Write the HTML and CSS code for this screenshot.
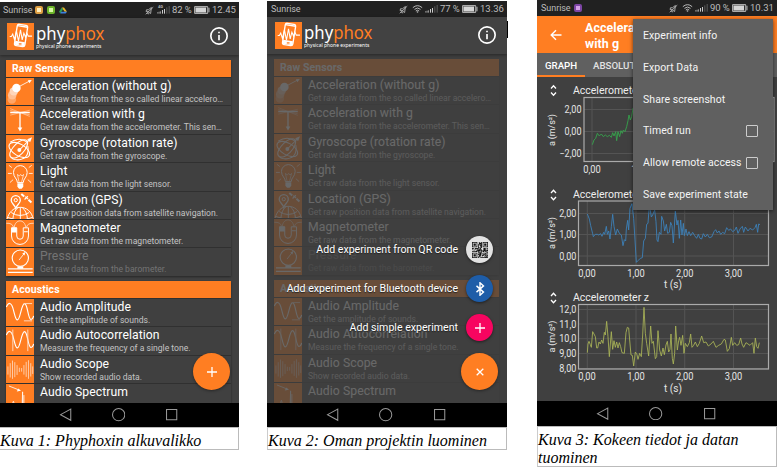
FILE: index.html
```html
<!DOCTYPE html>
<html lang="fi">
<head>
<meta charset="utf-8">
<title>Phyphox</title>
<link rel="stylesheet" href="styles.css">
</head>
<body>
<svg class="defs" width="0" height="0">
  <symbol id="logo" viewBox="0 0 80 80">
    <rect width="80" height="80" fill="#ff7e22"/>
    <g transform="rotate(9 42 38)" fill="none" stroke="#fff" stroke-width="4">
      <rect x="26" y="5" width="31" height="64" rx="6"/>
      <path d="M27 61H56" stroke-width="12"/>
      <path d="M26 10H57" stroke-width="4"/>
    </g>
    <path d="M8 40h5l4-7 5 16 6-26 6 31 6-34 5 30 5-20 5 12 4-12 4 9h11" fill="none" stroke="#fff" stroke-width="3.2"/>
    <path d="M35 62h8" stroke="#ff7e22" stroke-width="4"/>
  </symbol>
  <symbol id="accel" viewBox="0 0 84 84">
    <circle cx="17" cy="66" r="13" fill="#ffa566"/><circle cx="18" cy="53" r="13" fill="#ffbf94"/><circle cx="23" cy="41" r="13" fill="#ffd6ba"/><circle cx="31" cy="31" r="13" fill="#fff"/>
    <path d="M32 30L72 9" stroke="#fff" stroke-width="2.5"/><path d="M78 6l-12 1 5 9z" fill="#fff"/>
  </symbol>
  <symbol id="gravity" viewBox="0 0 84 84">
    <g stroke="#fff" fill="none"><path d="M12 20H72" stroke-width="5"/><path d="M12 8L72 32M12 14L72 27M12 28L72 13" stroke-width="1.6" opacity=".8"/><path d="M42 20V68" stroke-width="4"/></g>
    <path d="M35 66h14l-7 12z" fill="#fff"/>
  </symbol>
  <symbol id="gyro" viewBox="0 0 84 84">
    <g stroke="#fff" fill="none" stroke-width="3.2"><ellipse cx="40" cy="46" rx="35" ry="18" transform="rotate(30 40 46)"/><path d="M12 66C2 48 48 2 64 18C74 36 30 86 12 66z"/><path d="M12 22Q40 4 64 22M66 34Q72 70 40 76Q20 78 12 66"/><path d="M40 46L70 16"/></g>
    <circle cx="40" cy="46" r="6" fill="#fff"/><path d="M79 7l-15 6 9 9z" fill="#fff"/>
  </symbol>
  <symbol id="light" viewBox="0 0 84 84">
    <g stroke="#fff" fill="none" stroke-width="3"><path d="M34 60C34 48 22 44 22 29a21 21 0 0 1 42 0C64 44 52 48 52 60z"/><path d="M39 58L34 35l6 5 4-5 4 5 5-5-6 23" stroke-width="2"/><path d="M8 7l9 7M5 32h12M11 60l10-9M78 7l-9 7M81 32H69M76 60l-10-9" stroke-width="2.5"/></g>
    <path d="M34 62h18v11l-5 6h-8l-5-6z" fill="#fff"/>
  </symbol>
  <symbol id="gps" viewBox="0 0 84 84">
    <g stroke="#fff" fill="none" stroke-width="3"><path d="M2 84C8 60 24 47 43 47s35 13 40 37M15 63q27 18 55 0M20 84q2-26 17-37M65 84q-2-26-17-37M43 47v37M4 78q38 15 76 0"/><path d="M29 50C25 38 15 35 15 25a14 14 0 0 1 28 0c0 10-10 13-14 25z" fill="#ff7e22" stroke-width="4"/><circle cx="29" cy="25" r="5"/><path d="M46 6l9 8M68 24l9 8" stroke-width="6"/><path d="M58 14l9 8M56 23l10-10" stroke-width="3.5"/></g>
  </symbol>
  <symbol id="magnet" viewBox="0 0 84 84">
    <g stroke="#fff" fill="none" stroke-width="3"><path d="M16 24v25a26 26 0 0 0 52 0V24H52v25a10 10 0 0 1-20 0V24z"/><path d="M54 36h12" /><path d="M24 23C28-4 56-4 60 23M0 10Q19 9 22 22M84 10Q65 9 62 22" stroke-width="2"/></g>
    <path d="M16 23h16v15H16z" fill="#fff"/>
  </symbol>
  <symbol id="pressure" viewBox="0 0 84 84">
    <g stroke="#fff" fill="none" stroke-width="3.5"><circle cx="43" cy="31" r="25"/><path d="M5 64h76M5 75h76" stroke-width="4"/><path d="M39 37L54 18" stroke-width="2.5"/></g><path d="M34 56h18v8H34zM58 12l-9 5 7 6z" fill="#fff"/>
  </symbol>
  <symbol id="amplitude" viewBox="0 0 84 84">
    <path d="M0 25C7 8 15 11 20 27C28 55 28 64 34 64C43 64 46 14 56 14C66 14 66 63 76 63Q81 63 84 52" fill="none" stroke="#fff" stroke-width="3.5"/><path d="M54 14h25M54 67h25" stroke="#ffd8bd" stroke-width="3"/>
  </symbol>
  <symbol id="autocorr" viewBox="0 0 84 84">
    <path d="M0 25C7 8 15 11 20 27C28 55 28 64 34 64C43 64 46 14 56 14C66 14 66 63 76 63Q81 63 84 52" fill="none" stroke="#fff" stroke-width="3.5"/><path d="M20 8V74M66 8V74" stroke="#ffd8bd" stroke-width="3"/>
  </symbol>
  <symbol id="scope" viewBox="0 0 84 84">
    <path d="M5 32V57M12 22V66M19 14V70M26 19V65M33 28V58M40 36V49M47 37V48M54 28V57M61 18V64M68 13V70M75 22V63M81 32V55" stroke="#ffd8bd" stroke-width="2.6"/>
  </symbol>
  <symbol id="spectrum" viewBox="0 0 84 84">
    <path d="M8 6L38 18" stroke="#fff" stroke-width="2.5"/><path d="M45 21l-13 2 5-9z" fill="#fff"/><path d="M18 84Q19 52 22 53Q24 54 25 84M48 84L50 24L51 84M54 84V34" stroke="#fff" fill="none" stroke-width="2.4"/>
  </symbol>
  <symbol id="mute" viewBox="0 0 24 24">
    <path d="M4 10h5l8-6-2 16-7-5H3zM2 22L22 3M6 20l5 1" fill="none" stroke="#bbb" stroke-width="2.3"/>
  </symbol>
  <symbol id="wifi" viewBox="0 0 32 24">
    <path d="M2 8Q16-4 30 8M7 13Q16 5 25 13M11 18Q16 13 21 18" fill="none" stroke="#bbb" stroke-width="3"/><circle cx="16" cy="21" r="2.5" fill="#bbb"/>
  </symbol>
  <symbol id="signal" viewBox="0 0 38 24">
    <path d="M2 18v5M6 17v6M10 16v7" stroke="#ccc" stroke-width="2"/><path d="M16 12v11M22 9v14" stroke="#ccc" stroke-width="3"/><path d="M29 4v19M36 0v23" stroke="#666" stroke-width="2.5"/>
  </symbol>
  <symbol id="battery" viewBox="0 0 45 22">
    <rect x="1.5" y="1.5" width="37" height="19" rx="2" fill="none" stroke="#aaa" stroke-width="3"/><path d="M4 4h30v14H4z" fill="#d5d5d5"/><path d="M42 5v12" stroke="#bbb" stroke-width="3"/>
  </symbol>
  <symbol id="info" viewBox="0 0 54 54">
    <circle cx="27" cy="27" r="24.5" fill="none" stroke="#fff" stroke-width="5"/><path d="M27 24v16M27 14v5" stroke="#fff" stroke-width="5"/>
  </symbol>
</svg>

<main class="sheet">
  <figure class="shot first">
    <div class="phone">
      <div class="status"><span class="carrier">Sunrise</span><i class="note amber"></i><i class="note green"></i><svg class="drive" viewBox="0 0 24 20"><path d="M8 1h7l9 13h-7z" fill="#e8b72b"/><path d="M8 1l4 6-8 12-4-5z" fill="#2c9b5b"/><path d="M7 14h17l-4 5H4z" fill="#3c7fe0"/></svg>
        <span class="grow"></span><svg class="mute"><use href="#mute"/></svg><span class="lte">4G</span><svg class="signal"><use href="#signal"/></svg><span class="pct">82 %</span><svg class="battery"><use href="#battery"/></svg><span class="clock">12.45</span></div>
      <header class="appbar"><svg class="logo"><use href="#logo"/></svg><div class="brand"><b>phy<em>phox</em></b><small>physical phone experiments</small></div><svg class="info"><use href="#info"/></svg></header>
      <div class="content" data-list></div>
      <nav class="navbar"></nav>
      <div class="fab"><svg viewBox="0 0 12 12"><path d="M6 1v10M1 6h10"/></svg></div>
    </div>
    <figcaption><span class="c1">Kuva 1: Phyphoxin alkuvalikko</span></figcaption>
  </figure>

  <figure class="shot second">
    <div class="phone">
      <div class="status"><span class="carrier">Sunrise</span><span class="grow"></span><svg class="mute"><use href="#mute"/></svg><svg class="wifi"><use href="#wifi"/></svg><svg class="signal"><use href="#signal"/></svg><span class="pct">77 %</span><svg class="battery"><use href="#battery"/></svg><span class="clock">13.36</span></div>
      <header class="appbar"><svg class="logo"><use href="#logo"/></svg><div class="brand"><b>phy<em>phox</em></b><small>physical phone experiments</small></div><svg class="info"><use href="#info"/></svg></header>
      <div class="content dim" data-list></div>
      <nav class="navbar"></nav>
      <div class="actions">
        <div class="action"><span class="a1">Add experiment from QR code</span><i class="mini white"><svg id="qr" viewBox="0 0 21 21"></svg></i></div>
        <div class="action"><span class="a2">Add experiment for Bluetooth device</span><i class="mini blue"><svg class="bt" viewBox="0 0 24 36"><path d="M3 10L21 26 12 34V2L21 10 3 26" fill="none" stroke="#fff" stroke-width="3.6"/></svg></i></div>
        <div class="action"><span class="a3">Add simple experiment</span><i class="mini pink"><svg class="plus" viewBox="0 0 12 12"><path d="M6 1v10M1 6h10"/></svg></i></div>
      </div>
      <div class="fab"><svg viewBox="0 0 12 12"><path d="M2.7 2.7l6.6 6.6M9.3 2.7L2.7 9.3"/></svg></div>
    </div>
    <i class="caret"></i>
    <figcaption><span class="c2">Kuva 2: Oman projektin luominen</span></figcaption>
  </figure>

  <figure class="shot third">
    <div class="phone">
      <div class="status"><span class="carrier">Sunrise</span><i class="note violet"></i><span class="grow"></span><svg class="mute"><use href="#mute"/></svg><svg class="wifi"><use href="#wifi"/></svg><svg class="signal"><use href="#signal"/></svg><span class="pct">90 %</span><svg class="battery"><use href="#battery"/></svg><span class="clock">10.31</span></div>
      <header class="expbar"><svg class="back" viewBox="0 0 12 12"><path d="M11.5 6H1.5M6 1.2L1.2 6 6 10.8"/></svg><h1>Accelera<br>with g</h1></header>
      <div class="tabs"><span class="tab on">GRAPH</span><span class="tab">ABSOLUTE</span></div>
      <div class="graphs"><svg id="charts" width="240" height="324" viewBox="537 77 240 324"></svg></div>
      <nav class="navbar"></nav>
      <div class="menu">
        <div><span>Experiment info</span></div><div><span>Export Data</span></div><div><span>Share screenshot</span></div>
        <div><span>Timed run</span><i></i></div><div><span>Allow remote access</span><i></i></div><div><span>Save experiment state</span></div>
      </div>
    </div>
    <figcaption><span class="c3">Kuva 3: Kokeen tiedot ja datan<br>tuominen</span></figcaption>
  </figure>
</main>
<script src="script.js"></script>
</body>
</html>
```
FILE: styles.css
```css
* { box-sizing: border-box; }
body { margin: 0; width: 779px; height: 470px; overflow: hidden; background: #fff; font-family: Roboto, sans-serif; color: #fff; }
.defs { position: absolute; }
.sheet { display: flex; align-items: flex-start; }
.shot { margin: 0; width: 240px; position: relative; }
.first { width: 239px; padding-top: 2px; margin-right: 28px; }
.second { padding-top: 1px; margin-right: 30px; }
.phone { position: relative; background: #404040; display: flex; flex-direction: column; overflow: hidden; }
.first .phone { height: 425px; }
.second .phone { height: 426px; }
.third .phone { height: 426px; }

.status { height: 16px; flex: none; background: #212121; color: #bcbcbc; font-size: 9px; line-height: 16px; display: flex; align-items: center; padding: 0 5px 0 4px; white-space: nowrap; }
.first .status { padding-left: 3px; }
.carrier { width: 29px; letter-spacing: -.05px; }
.grow { flex: 1; }
.note { width: 8px; height: 8px; border-radius: 2px; margin-left: 4px; border: 2px solid; }
.first .carrier { margin-right: -1px; }
.amber { background: #fff0c0; border-color: #dfa044; }
.green { background: #d9f7a8; border-color: #6eb52b; }
.violet { background: #d4a0e8; border-color: #7d45a5; }
.drive { width: 8px; height: 7px; margin-left: 4px; }
.mute { width: 9px; height: 9px; margin-right: 4px; }
.wifi { width: 11px; height: 8px; margin-right: 2px; }
.signal { width: 13px; height: 8px; margin-right: 2px; }
.lte { font-size: 4px; width: 5px; line-height: 5px; align-self: flex-start; margin: 2px -6px 0 0; font-weight: 700; }
.pct { font-size: 9.5px; width: 19px; letter-spacing: -.1px; }
.battery { width: 16px; height: 8px; margin: 0 2px 0 3px; }
.clock { font-size: 9.5px; width: 22px; text-align: right; }

.appbar { height: 37px; flex: none; background: #424242; display: flex; padding: 5px 11px 0 7px; box-shadow: 0 1px 3px rgba(0,0,0,.4); z-index: 1; }
.second .appbar { padding: 5px 11px 0 8px; }
.logo { width: 27px; height: 27px; margin-right: 2px; }
.brand { flex: 1; display: flex; flex-direction: column; font-family: "Noto Sans", sans-serif; transform: scaleX(.9); transform-origin: left; }
.brand b { font-weight: 400; font-size: 18.6px; line-height: 20px; height: 20px; letter-spacing: 0; }
.brand em { font-style: normal; color: #ff7e22; }
.brand small { font-size: 5.5px; line-height: 7px; white-space: nowrap; }
.info { width: 18px; height: 18px; margin-top: 4px; }

.content { flex: 1; min-height: 0; overflow: hidden; padding: 5px 8px 0 6px; position: relative; }
.second .content { padding-left: 7px; }
.dim::after { content: ""; position: absolute; inset: 0; background: rgba(64,64,64,.79); }
.card { margin-bottom: 5px; box-shadow: 0 1px 2px rgba(0,0,0,.4); }
.card h2 { margin: 0; height: 17px; background: #ff7e22; font-size: 10.5px; line-height: 18px; font-weight: 700; padding-left: 6px; letter-spacing: .08px; }
.row { height: 28.4px; border-top: 1px solid #303030; display: flex; }
.row svg { width: 28px; height: 27.4px; background: #ff7e22; flex: none; margin-right: 6px; }
.row div { min-width: 0; flex: 1; white-space: nowrap; }
.row b { display: block; font-weight: 400; font-size: 12.2px; line-height: 15px; height: 16px; padding-top: 1px; letter-spacing: .08px; }
.row small { display: block; font-size: 8.6px; line-height: 11px; color: #c4c4c4; }
.off b, .off small { color: #747474; }

.navbar { height: 24px; flex: none; background: #000; display: flex; align-items: center; justify-content: center; gap: 40px; padding-right: 2px; }
.third .navbar { height: 25px; }
.navbar svg { width: 13.3px; height: 13.3px; fill: none; stroke: #999; stroke-width: 1; }

.fab { position: absolute; left: 193px; top: 351px; width: 37px; height: 37px; border-radius: 50%; background: #ff7e22; display: flex; align-items: center; justify-content: center; box-shadow: 0 1px 3px rgba(0,0,0,.4); }
.second .fab { left: 194px; top: 352px; }
.fab svg, .plus { width: 12px; height: 12px; stroke: #fff; fill: none; stroke-width: 1.3; }
.actions { position: absolute; right: 14px; top: 235px; display: flex; flex-direction: column; gap: 12px; align-items: flex-end; }
.action { display: flex; align-items: center; height: 27px; gap: 8px; font-size: 10.6px; white-space: nowrap; text-shadow: 0 1px 1px #222; }
.action span { margin-top: -1px; }
.mini { width: 27px; height: 27px; border-radius: 50%; display: flex; align-items: center; justify-content: center; box-shadow: 0 1px 3px rgba(0,0,0,.5); }
.white { background: #e2e2e2; }
.blue { background: #1e5da8; }
.pink { background: #f70560; }
#qr { width: 16px; height: 16px; }
.bt { width: 10px; height: 14px; }
.caret { position: absolute; left: 239px; top: 21px; width: 2px; height: 17px; background: #000; }

.expbar { height: 37px; flex: none; background: #ff7e22; display: flex; }
.back { width: 12px; height: 12px; margin: 13px 23px 0 13px; fill: none; stroke: #fff; stroke-width: 1.4; }
.expbar h1 { margin: 4px 0 0; font-size: 12.4px; line-height: 15.6px; font-weight: 700; letter-spacing: .1px; }
.tabs { height: 24px; flex: none; background: #606060; display: flex; font-size: 9.7px; font-weight: 500; line-height: 25px; }
.tab { padding: 0 8px; height: 24px; color: #e2e2e2; }
.tab.on { color: #fff; border-bottom: 2px solid #ff7e22; width: 48px; }
.graphs { flex: 1; min-height: 0; }
.graphs svg { display: block; }
.graphs text { font-size: 10px; fill: #e4e4e4; }
.graphs .title { font-size: 10.5px; fill: #eee; }
.menu { position: absolute; left: 96px; top: 19px; width: 140px; height: 191px; padding-top: .6px; background: #606060; box-shadow: 0 1px 4px rgba(0,0,0,.6); font-size: 10.5px; letter-spacing: .06px; color: #f4f4f4; }
.menu div { height: 31.8px; display: flex; align-items: center; justify-content: space-between; padding: 0 15px 0 10px; white-space: nowrap; }
.menu i { width: 12px; height: 12px; border: 1.5px solid #ccc; border-radius: 1px; }

figcaption { height: 23px; border: 1px solid #bbb; border-left-color: #ccc; color: #000; font: italic 16px/18px "Liberation Serif", serif; white-space: nowrap; padding-top: 4px; }
.first figcaption { border-left: 0; }
.third figcaption { height: 41px; padding-top: 4px; }
```
FILE: script.js
```js
const groups = [
  ["Raw Sensors", [
    ["accel", "Acceleration (without g)", "Get raw data from the so called linear accelero…"],
    ["gravity", "Acceleration with g", "Get raw data from the accelerometer. This sen…"],
    ["gyro", "Gyroscope (rotation rate)", "Get raw data from the gyroscope."],
    ["light", "Light", "Get raw data from the light sensor."],
    ["gps", "Location (GPS)", "Get raw position data from satellite navigation."],
    ["magnet", "Magnetometer", "Get raw data from the magnetometer."],
    ["pressure", "Pressure", "Get raw data from the barometer."]]],
  ["Acoustics", [
    ["amplitude", "Audio Amplitude", "Get the amplitude of sounds."],
    ["autocorr", "Audio Autocorrelation", "Measure the frequency of a single tone."],
    ["scope", "Audio Scope", "Show recorded audio data."],
    ["spectrum", "Audio Spectrum", ""]]]
];
const listHtml = groups.map(([title, rows]) => `<section class="card"><h2>${title}</h2>` +
  rows.map(([icon, name, text]) => `<div class="row${icon === "pressure" ? " off" : ""}"><svg><use href="#${icon}"/></svg><div><b>${name}</b><small>${text}</small></div></div>`).join("") +
  "</section>").join("");
document.querySelectorAll("[data-list]").forEach(el => { el.innerHTML = listHtml; });

document.querySelectorAll(".navbar").forEach(el => {
  el.innerHTML = '<svg viewBox="0 0 13 13"><path d="M11.5 1v11L1.5 6.5z"/></svg><svg viewBox="0 0 13 13"><circle cx="6.5" cy="6.5" r="6"/></svg><svg viewBox="0 0 13 13"><path d="M1.5 1.5h10v10h-10z"/></svg>';
});

// QR glyph: three finder marks around a scattered module pattern
let qr = "";
let seed = 7;
for (let y = 0; y < 21; y++) for (let x = 0; x < 21; x++) {
  seed = (seed * 1103515245 + 12345) % 2147483648;
  const corner = (x < 8 && y < 8) || (x > 12 && y < 8) || (x < 8 && y > 12);
  if (!corner && seed / 2147483648 > 0.32) qr += `M${x} ${y}h1v1h-1z`;
}
for (const [x, y] of [[0, 0], [14, 0], [0, 14]])
  qr += `M${x} ${y}h7v7h-7zM${x + 1} ${y + 1}v5h5v-5zM${x + 2} ${y + 2}h3v3h-3z`;
document.getElementById("qr").innerHTML = `<path d="${qr}" fill="#111" fill-rule="evenodd"/>`;

const charts = [
  { title: 93, box: [584, 97.5, 190, 64], xs: [592], xl: [["0,00", 592], ["1,00", 640]], xly: 172.5,
    ys: [["2,00", 109.5], ["0,00", 131.5], ["−2,00", 153.5]], right: 581.5, name: "x", axis: 130, unit: 184, color: "#35a84c", origin: [530, 0],
    line: "187,434 192,420 197,415 202,400 208,408 214,402 220,410 226,405 232,410 238,406 244,412 248,398 252,408 257,395 260,422 264,395 269,410 273,392 277,400 280,390 285,395 290,380 294,362 297,345 301,360 305,350 309,325 315,340" },
  { title: 197.5, box: [578.5, 201, 190, 64.5], xs: [587.3, 636, 684.7, 733.5], xl: [["0,00", 587], ["1,00", 636], ["2,00", 684.7], ["3,00", 733.5]], xly: 276.5,
    ys: [["2,00", 213.5], ["1,00", 234.5], ["0,00", 256]], right: 576.3, name: "y", axis: 233, unit: 287.5, color: "#3c83bd", origin: [530, 155],
    line: "172,177 178,192 182,212 188,236 190,245 196,238 202,238 206,240 212,236 216,244 221,232 224,238 229,214 232,238 236,228 240,252 244,215 248,178 252,214 257,240 262,222 268,235 274,240 279,272 283,254 287,258 289,222 293,196 296,225 300,160 306,146 311,190 315,255 319,322 325,316 331,310 337,308 341,258 346,250 350,208 354,205 357,165 360,160 364,186 368,180 374,165 378,200 381,255 384,260 388,232 393,238 395,184 400,198 404,228 409,208 413,235 418,232 422,202 426,212 430,264 436,168 441,210 444,196 448,250 452,195 456,240 460,205 463,242 468,222 472,242 477,230 482,242 488,232 494,242 500,250 505,238 510,250 515,252 520,236 526,246 532,238 538,248 545,246 552,230 557,224 562,234 567,228 572,238 578,232 584,236 590,218 596,226 602,222 608,230 614,226 619,216 624,235 630,222 637,214 641,232 646,216 654,228 660,220 668,225 675,218 679,208 683,232 686,207 690,209" },
  { title: 300.5, box: [578.5, 304.5, 190, 64.5], xs: [587.3, 636, 684.7, 733.5], xl: [["0,00", 587], ["1,00", 636], ["2,00", 684.7], ["3,00", 733.5]], xly: 380,
    ys: [["12,0", 309.5], ["11,0", 324], ["10,0", 338.7], ["9,00", 353.5], ["8,00", 368.5]], right: 576.3, name: "z", axis: 336.5, unit: 391.5, color: "#a9b457", origin: [530, 300],
    line: "172,158 174,132 177,124 181,134 184,142 188,95 192,102 196,110 200,144 203,144 207,126 211,132 215,120 219,130 223,97 226,105 230,64 234,110 238,170 244,95 248,148 252,122 256,142 260,126 264,144 268,128 272,140 276,158 283,160 288,98 292,82 296,84 299,120 303,165 307,166 311,198 316,156 321,164 324,178 329,160 334,170 338,105 342,22 346,100 350,130 356,168 362,78 366,130 370,124 376,176 380,170 384,92 389,150 394,168 399,144 403,164 408,135 412,124 416,156 420,148 423,102 427,175 430,192 434,160 437,78 442,150 446,122 449,112 453,136 458,106 462,160 466,130 472,140 478,128 482,102 486,142 491,136 496,126 502,140 508,130 515,108 521,128 528,126 535,138 543,132 550,124 558,142 566,136 574,132 582,118 586,120 592,154 598,146 604,112 608,136 614,128 620,136 626,134 632,114 636,132 641,142 648,128 654,132 660,136 668,128 672,160 676,114 680,140 684,145 688,128" }
];
document.getElementById("charts").innerHTML = charts.map(c => {
  const [x, y, w, h] = c.box;
  const grid = c.xs.map(v => `M${v} ${y}v${h}`).join("") + c.ys.map(v => `M${x} ${v[1]}h${w}`).join("");
  const t = c.title - 3;
  return `<path d="M551 ${t - 1.5}l2.5-2.7 2.5 2.7M551 ${t + 2.5}l2.5 2.7 2.5-2.7" fill="none" stroke="#fff" stroke-width="1.3"/>
    <text class="title" x="573" y="${c.title + .5}" textLength="76">Accelerometer ${c.name}</text>
    <path d="${grid}" stroke="#545454" fill="none"/>
    <rect x="${x}" y="${y}" width="${w}" height="${h}" fill="none" stroke="#aaa" stroke-width="1.2"/>
    <polyline points="${c.line}" transform="translate(${c.origin}) scale(.33333)" fill="none" stroke="${c.color}" stroke-width="2.6"/>
    ${c.ys.map(v => `<text x="${c.right}" y="${v[1] + 3.5}" text-anchor="end" textLength="${v[0].length === 5 ? 22 : 17}" lengthAdjust="spacingAndGlyphs">${v[0]}</text>`).join("")}
    ${c.xl.map(v => `<text x="${v[1]}" y="${c.xly}" text-anchor="middle" textLength="17.5" lengthAdjust="spacingAndGlyphs">${v[0]}</text>`).join("")}
    <text x="673" y="${c.unit}" text-anchor="middle">t (s)</text>
    <text transform="translate(555 ${c.axis}) rotate(-90)" text-anchor="middle" style="font-size:9px" textLength="32">a (m/s²)</text>`;
}).join("");
```
